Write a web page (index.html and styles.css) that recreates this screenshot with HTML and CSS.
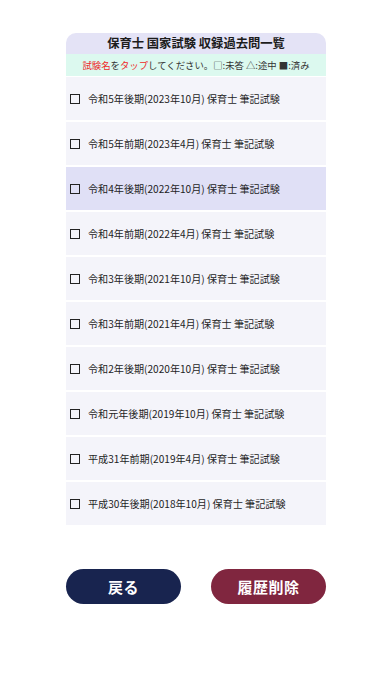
FILE: index.html
```html
<!DOCTYPE html>
<html lang="ja">
<head>
<meta charset="utf-8">
<title>保育士 国家試験 収録過去問一覧</title>
<link rel="stylesheet" href="styles.css">
</head>
<body>
<main class="page">
  <section class="card">
    <h1 class="card-title">保育士 国家試験 収録過去問一覧</h1>
    <p class="hint"><span class="red">試験名</span>を<span class="red">タップ</span>してください。□:未答 △:途中 ■:済み</p>
    <ul class="exam-list">
      <li class="exam"><span class="box"></span><span class="exam-name">令和5年後期(2023年10月) 保育士 筆記試験</span></li>
      <li class="exam"><span class="box"></span><span class="exam-name">令和5年前期(2023年4月) 保育士 筆記試験</span></li>
      <li class="exam selected"><span class="box"></span><span class="exam-name">令和4年後期(2022年10月) 保育士 筆記試験</span></li>
      <li class="exam"><span class="box"></span><span class="exam-name">令和4年前期(2022年4月) 保育士 筆記試験</span></li>
      <li class="exam"><span class="box"></span><span class="exam-name">令和3年後期(2021年10月) 保育士 筆記試験</span></li>
      <li class="exam"><span class="box"></span><span class="exam-name">令和3年前期(2021年4月) 保育士 筆記試験</span></li>
      <li class="exam"><span class="box"></span><span class="exam-name">令和2年後期(2020年10月) 保育士 筆記試験</span></li>
      <li class="exam"><span class="box"></span><span class="exam-name">令和元年後期(2019年10月) 保育士 筆記試験</span></li>
      <li class="exam"><span class="box"></span><span class="exam-name">平成31年前期(2019年4月) 保育士 筆記試験</span></li>
      <li class="exam"><span class="box"></span><span class="exam-name">平成30年後期(2018年10月) 保育士 筆記試験</span></li>
    </ul>
  </section>
  <div class="actions">
    <button class="btn btn-back">戻る</button>
    <button class="btn btn-delete">履歴削除</button>
  </div>
</main>
</body>
</html>
```
FILE: styles.css
```css
* { box-sizing: border-box; }
html, body {
  margin: 0;
  padding: 0;
  background: #ffffff;
}
body {
  font-family: "Noto Sans CJK JP", "Noto Sans", sans-serif;
  color: #222;
}
.page {
  width: 260px;
  margin: 0 auto;
  padding-top: 33px;
}
.card {
  display: flex;
  flex-direction: column;
}
.card-title {
  margin: 0;
  height: 21px;
  background: #e4e3f6;
  border-radius: 10px 10px 0 0;
  font-size: 12.3px;
  font-weight: 700;
  line-height: 21px;
  text-align: center;
  color: #1c1c1c;
}
.hint {
  margin: 0;
  height: 22px;
  background: #dcf9ef;
  font-size: 9.4px;
  line-height: 22px;
  text-align: center;
  color: #333;
  white-space: nowrap;
}
.red { color: #ee2b2b; }
.exam-list {
  list-style: none;
  margin: 1px 0 0;
  padding: 0;
  display: flex;
  flex-direction: column;
  gap: 2px;
}
.exam {
  height: 43px;
  background: #f4f4fa;
  display: flex;
  align-items: center;
  padding-left: 4px;
  gap: 8px;
  font-size: 10.1px;
  color: #1e1e1e;
}
.exam.selected { background: #e0e0f6; }
.box {
  width: 10px;
  height: 10px;
  border: 1.7px solid #222;
  flex: none;
}
.actions {
  margin-top: 44px;
  display: flex;
  justify-content: space-between;
}
.btn {
  width: 115px;
  height: 35px;
  border: none;
  border-radius: 18px;
  color: #fff;
  font-family: "Noto Sans CJK JP", "Noto Sans", sans-serif;
  font-size: 15px;
  font-weight: 700;
  padding: 0;
  letter-spacing: 0.5px;
}
.btn-back { background: #18244f; }
.btn-delete { background: #80263f; }
```
